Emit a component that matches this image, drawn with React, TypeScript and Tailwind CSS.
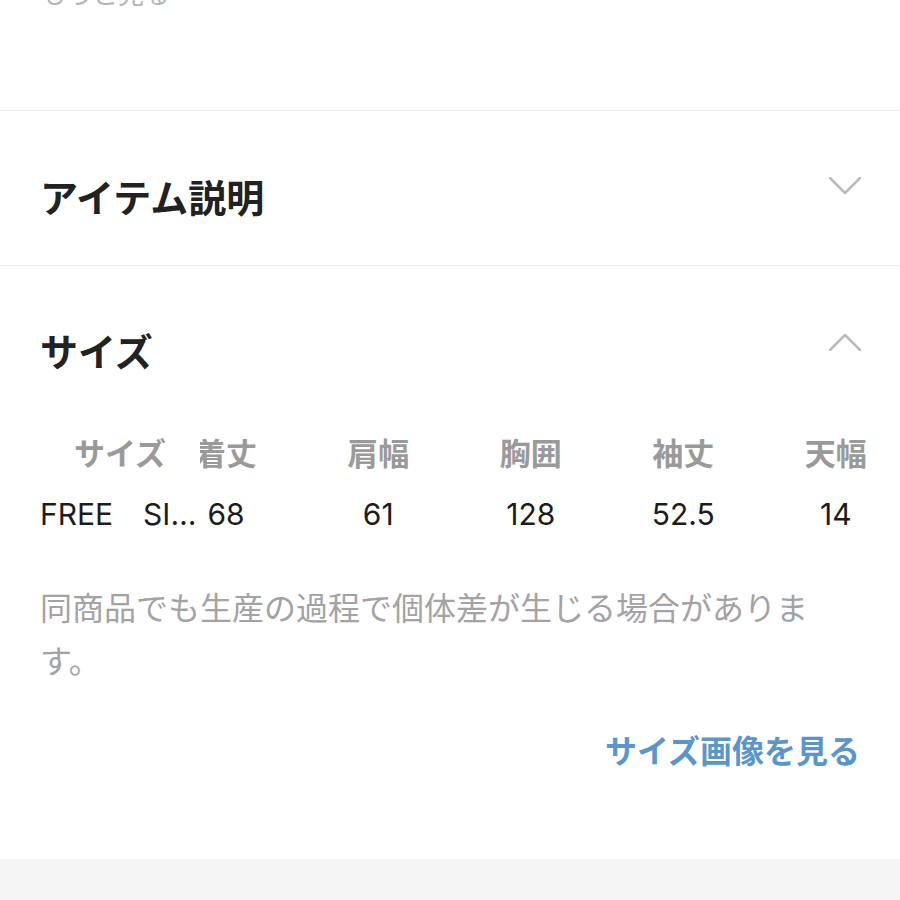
import React from 'react';

const jp = { fontFamily: '"Noto Sans CJK JP", "Noto Sans", sans-serif' };
const num = { fontFamily: 'Inter, "Noto Sans CJK JP", sans-serif' };

const sizeCols = [
  { label: '肩幅', value: '61' },
  { label: '胸囲', value: '128' },
  { label: '袖丈', value: '52.5' },
  { label: '天幅', value: '14' },
];

function Chevron({ up }: { up?: boolean }) {
  return (
    <svg width="32" height="18" viewBox="0 0 32 18" fill="none" className="shrink-0">
      <path
        d={up ? 'M1 17L16 2L31 17' : 'M1 1L16 16L31 1'}
        stroke="#bababa"
        strokeWidth="2.5"
        strokeLinecap="round"
        strokeLinejoin="round"
      />
    </svg>
  );
}

export default function App() {
  return (
    <div className="w-[900px] h-[900px] overflow-hidden bg-white" style={jp}>
      {/* previous section tail */}
      <div className="h-[110px] px-10 overflow-hidden">
        <p className="-mt-[25px] text-[26px] leading-[36px] text-[#b5b5b5]">もっと見る</p>
      </div>

      <div className="border-t border-[#ececec]" />

      {/* item description (collapsed) */}
      <section className="h-[154px] pl-10 pr-[40px] pt-[61px] flex items-start justify-between">
        <h2 className="text-[38px] leading-[48px] font-bold text-[#222]">アイテム説明</h2>
        <div className="mt-[5px] mr-[-1px]">
          <Chevron />
        </div>
      </section>

      <div className="border-t border-[#ececec]" />

      {/* size (expanded) */}
      <section className="pl-10 pt-[60px] pb-[86px]">
        <div className="flex items-start justify-between pr-[40px]">
          <h2 className="text-[38px] leading-[48px] font-bold text-[#222]">サイズ</h2>
          <div className="mt-[7px] mr-[-1px]">
            <Chevron up />
          </div>
        </div>

        {/* size table */}
        <div className="mt-[47px] overflow-hidden">
          <div className="flex h-[62px] items-center">
            <div className="w-[160px] shrink-0 text-center text-[31px] font-semibold text-[#9a9a9a]">サイズ</div>
            <div className="w-[102px] shrink-0 overflow-hidden">
              <div className="w-[52px] flex justify-center">
                <span className="whitespace-nowrap text-[31px] font-semibold text-[#9a9a9a]">着丈</span>
              </div>
            </div>
            {sizeCols.map((c) => (
              <div key={c.label} className="w-[152.5px] shrink-0 text-center text-[31px] font-semibold text-[#9a9a9a]">
                {c.label}
              </div>
            ))}
          </div>
          <div className="flex h-[62px] items-center text-[30px] text-[#1c1c1c]" style={num}>
            <div className="w-[160px] shrink-0 truncate">FREE　SIZE</div>
            <div className="w-[102px] shrink-0">
              <div className="w-[52px] text-center">68</div>
            </div>
            {sizeCols.map((c) => (
              <div key={c.label} className="w-[152.5px] shrink-0 text-center">
                {c.value}
              </div>
            ))}
          </div>
        </div>

        <p className="mt-[35px] max-w-[790px] text-[32px] leading-[53px] text-[#a3a3a3]">
          同商品でも生産の過程で個体差が生じる場合があります。
        </p>

        <div className="mt-[39px] pr-[40px] flex justify-end">
          <a className="text-[32px] leading-[48px] font-bold text-[#5a96cd]">サイズ画像を見る</a>
        </div>
      </section>

      <div className="h-[60px] bg-[#f5f5f5]" />
    </div>
  );
}
